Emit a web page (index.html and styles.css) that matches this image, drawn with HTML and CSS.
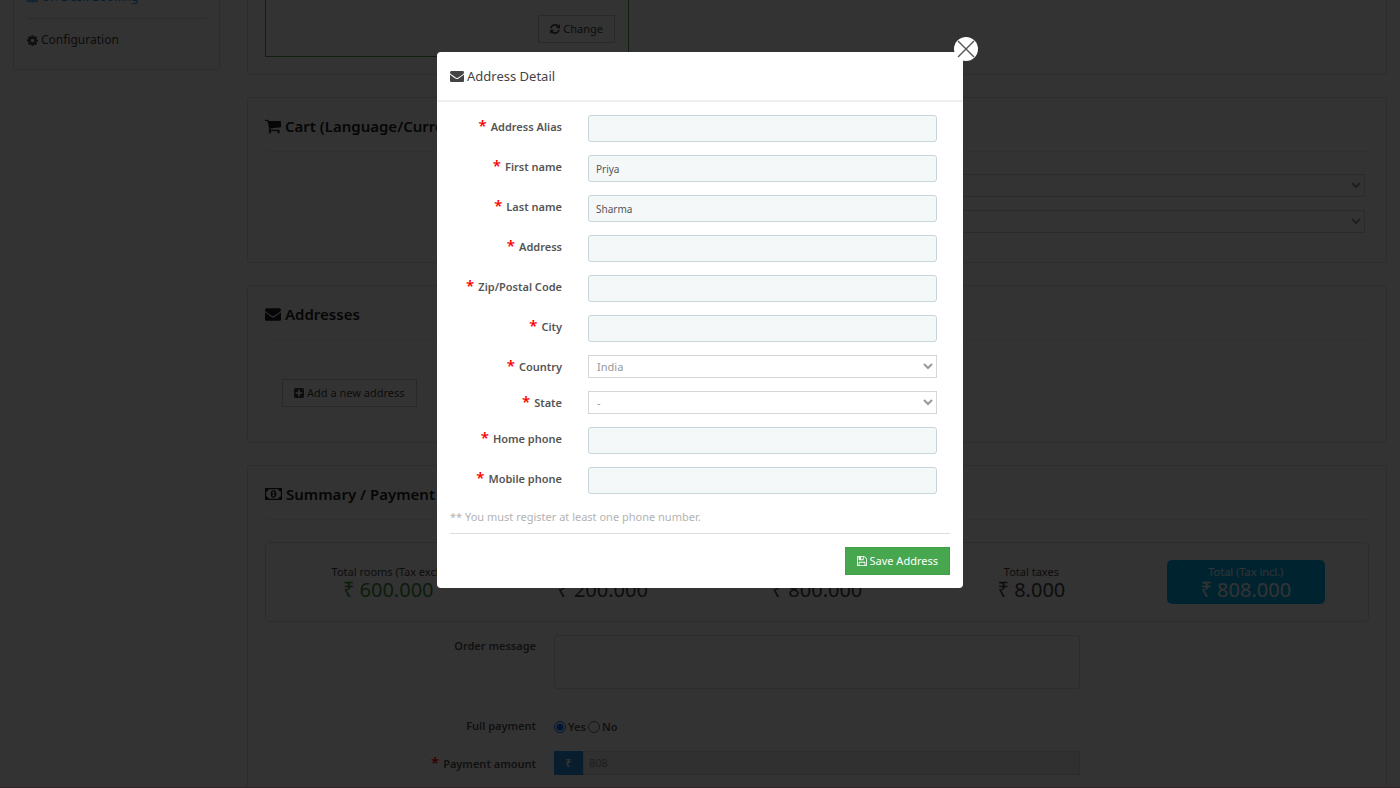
FILE: index.html
```
<!DOCTYPE html>
<html lang="en">
<head>
    <meta charset="UTF-8">
    <meta name="viewport" content="width=device-width, initial-scale=1.0">
    <title>Book Now</title>
    <link rel="stylesheet" href="styles.css">
</head>
<body>
    <!-- Icons used more than once -->
    <svg class="sprite" aria-hidden="true">
        <symbol id="icon-envelope" viewBox="0 0 1792 1792">
            <path d="M1792 710v794q0 66-47 113t-113 47H160q-66 0-113-47T0 1504V710q44 49 101 87 362 246 497 345 57 42 92.500 65.500t94.500 48 110 24.500h2q51 0 110-24.500t94.500-48 92.500-65.500q170-123 498-345 57-39 100-87zm0-294q0 79-49 151t-122 123q-376 261-468 325-10 7-42.500 30.500t-54 38-52 32.500-57.500 27-50 9h-2q-23 0-50-9t-57.500-27-52-32.500-54-38T639 1015q-91-64-262-182.500T172 690q-62-42-117-115.500T0 438q0-78 41.500-130T160 256h1472q65 0 112.500 47t47.500 113z"/>
        </symbol>
    </svg>

    <div class="page">
        <nav class="sidebar">
            <a href="#" class="menu-link active">
                <svg class="icon" viewBox="0 0 16 14"><path d="M1 1h14v12H1zM1 4.500h14M4.500 4v9M8 4v9M11.500 4v9M1 7.500h14M1 10.500h14" fill="none" stroke="currentColor" stroke-width="1.200"/></svg>
                On Desk Booking
            </a>
            <hr>
            <a href="#" class="menu-link">
                <svg class="icon" viewBox="128 128 1536 1536"><path fill="currentColor" d="M1152 896q0-106-75-181t-181-75-181 75-75 181 75 181 181 75 181-75 75-181zm512-109v222q0 12-8 23t-20 13l-185 28q-19 54-39 91 35 50 107 138 10 12 10 25t-9 23q-27 37-99 108t-94 71q-12 0-26-9l-138-108q-44 23-91 38-16 136-29 186-7 28-36 28H785q-14 0-24.500-8.500T749 1640l-28-184q-49-16-90-37l-141 107q-10 9-25 9-14 0-25-11-126-114-165-168-7-10-7-23 0-12 8-23 15-21 51-66.500t54-70.500q-27-50-41-99l-183-27q-13-2-21-12.500t-8-23.500V783q0-12 8-23t19-13l186-28q14-46 39-92-40-57-107-138-10-12-10-24 0-10 9-23 26-36 98.500-107.500T465 286q13 0 26 10l138 107q44-23 91-38 16-136 29-186 7-28 36-28h222q14 0 24.500 8.500T1043 181l28 184q49 16 90 37l142-107q9-9 24-9 13 0 25 10 129 119 165 170 7 8 7 22 0 12-8 23-15 21-51 66.500t-54 70.500q26 50 41 98l183 28q13 2 21 12.500t8 23.500z"/></svg>
                Configuration
            </a>
        </nav>

        <main class="content">
            <section class="card card-booking">
                <div class="selected-box">
                    <button type="button" class="btn">
                        <svg class="icon" viewBox="0 0 1536 1536"><path fill="currentColor" d="M1511 928q0 5-1 7-64 268-268 434.500T764 1536q-146 0-282.500-55T238 1324l-129 129q-19 19-45 19t-45-19-19-45V960q0-26 19-45t45-19h448q26 0 45 19t19 45-19 45l-137 137q71 66 161 102t187 36q134 0 250-65t186-179q11-17 53-117 8-23 30-23h192q13 0 22.500 9.500t9.500 22.500zm25-800v448q0 26-19 45t-45 19h-448q-26 0-45-19t-19-45 19-45l138-138Q969 256 768 256q-134 0-250 65T332 500q-11 17-53 117-8 23-30 23H50q-13 0-22.500-9.500T18 608v-7q65-268 270-434.500T768 0q146 0 284 55.500T1297 212l130-129q19-19 45-19t45 19 19 45z"/></svg>
                        Change
                    </button>
                </div>
            </section>

            <section class="card card-cart">
                <h2>
                    <svg class="icon" viewBox="0 0 1664 1536"><path fill="currentColor" d="M640 1408q0 52-38 90t-90 38-90-38-38-90 38-90 90-38 90 38 38 90zm896 0q0 52-38 90t-90 38-90-38-38-90 38-90 90-38 90 38 38 90zm128-1088v512q0 24-16.500 42.500T1607 896L563 1018q13 60 13 70 0 16-24 64h920q26 0 45 19t19 45-19 45-45 19H448q-26 0-45-19t-19-45q0-11 8-31.500t16-36 21.500-40T445 1079L268 256H64q-26 0-45-19T0 192t19-45 45-19h256q16 0 28.500 6.500T368 150t13 24.500 8 26 5.500 29.500 4.500 26h1201q26 0 45 19t19 45z"/></svg>
                    Cart (Language/Currency)
                </h2>
                <hr>
                <div class="cart-selects">
                    <select class="select" aria-label="Language"><option></option></select>
                    <select class="select" aria-label="Currency"><option></option></select>
                </div>
            </section>

            <section class="card card-addresses">
                <h2>
                    <svg class="icon" fill="currentColor"><use href="#icon-envelope"/></svg>
                    Addresses
                </h2>
                <hr>
                <button type="button" class="btn btn-add">
                    <svg class="icon" viewBox="0 0 1536 1536"><path fill="currentColor" d="M1280 832V704q0-26-19-45t-45-19H896V320q0-26-19-45t-45-19H704q-26 0-45 19t-19 45v320H320q-26 0-45 19t-19 45v128q0 26 19 45t45 19h320v320q0 26 19 45t45 19h128q26 0 45-19t19-45V896h320q26 0 45-19t19-45zm256-544v960q0 119-84.500 203.500T1248 1536H288q-119 0-203.500-84.500T0 1248V288Q0 169 84.500 84.500T288 0h960q119 0 203.500 84.500T1536 288z"/></svg>
                    Add a new address
                </button>
            </section>

            <section class="card card-summary">
                <h2>
                    <svg class="icon icon-wide" viewBox="0 0 17 12"><path fill="currentColor" fill-rule="evenodd" d="M0 0h17v12H0zM3.500 1.200A2.300 2.300 0 0 1 1.200 3.500v5a2.300 2.300 0 0 1 2.300 2.300h10a2.300 2.300 0 0 1 2.300-2.300v-5a2.300 2.300 0 0 1-2.300-2.300zM8.500 2.200a2.800 3.800 0 1 1 0 7.600 2.800 3.800 0 0 1 0-7.600zM8 3.400L6.900 4.400l.5.600.5-.3v2.700H7v.9h3v-.9h-.9v-4z"/></svg>
                    Summary / Payment
                </h2>
                <hr>
                <div class="totals">
                    <div class="total total-rooms">Total rooms (Tax excl.)<strong>₹ 600.000</strong></div>
                    <div class="total">Extra services<strong>₹ 200.000</strong></div>
                    <div class="total">Total (Tax excl.)<strong>₹ 800.000</strong></div>
                    <div class="total">Total taxes<strong>₹ 8.000</strong></div>
                    <div class="total total-final">Total (Tax incl.)<strong>₹ 808.000</strong></div>
                </div>
                <form class="payment-form">
                    <label class="label" for="order_message">Order message</label>
                    <div class="field"><textarea id="order_message"></textarea></div>
                    <span class="label">Full payment</span>
                    <div class="field radios">
                        <input type="radio" name="full_payment" id="full_yes" checked><label for="full_yes">Yes</label>
                        <input type="radio" name="full_payment" id="full_no"><label for="full_no">No</label>
                    </div>
                    <label class="label required" for="payment_amount">Payment amount</label>
                    <div class="field amount">
                        <span class="addon">₹</span>
                        <input type="text" id="payment_amount" value="808" disabled>
                    </div>
                </form>
            </section>
        </main>
    </div>

    <div class="overlay">
        <div class="modal" role="dialog" aria-labelledby="modal_title">
            <button type="button" class="close" aria-label="Close">
                <svg viewBox="0 0 24 24"><path d="M4 4l16 16M20 4L4 20" fill="none" stroke="#555" stroke-width="1.400"/></svg>
            </button>
            <h3 class="modal-title" id="modal_title">
                <svg class="icon" fill="currentColor"><use href="#icon-envelope"/></svg>
                Address Detail
            </h3>
            <form class="modal-body">
                <div class="address-form">
                    <label class="label required" for="alias">Address Alias</label>
                    <input type="text" class="input" id="alias">
                    <label class="label required" for="firstname">First name</label>
                    <input type="text" class="input" id="firstname" value="Priya">
                    <label class="label required" for="lastname">Last name</label>
                    <input type="text" class="input" id="lastname" value="Sharma">
                    <label class="label required" for="address1">Address</label>
                    <input type="text" class="input" id="address1">
                    <label class="label required" for="postcode">Zip/Postal Code</label>
                    <input type="text" class="input" id="postcode">
                    <label class="label required" for="city">City</label>
                    <input type="text" class="input" id="city">
                    <label class="label required" for="country">Country</label>
                    <select class="select" id="country"><option>India</option></select>
                    <label class="label required" for="state">State</label>
                    <select class="select" id="state"><option>-</option></select>
                    <label class="label required" for="phone">Home phone</label>
                    <input type="text" class="input" id="phone">
                    <label class="label required" for="phone_mobile">Mobile phone</label>
                    <input type="text" class="input" id="phone_mobile">
                </div>
                <p class="note">** You must register at least one phone number.</p>
                <div class="modal-footer">
                    <button type="button" class="btn btn-success">
                        <svg class="icon" viewBox="0 0 1536 1536"><path fill="currentColor" d="M384 1408h768v-384H384v384zm896 0h128V512q0-14-10-38.500t-20-34.500l-281-281q-10-10-34-20t-39-10v416q0 40-28 68t-68 28H352q-40 0-68-28t-28-68V128H128v1280h128V992q0-40 28-68t68-28h832q40 0 68 28t28 68v416zM896 480V160q0-13-9.500-22.500T864 128H672q-13 0-22.500 9.500T640 160v320q0 13 9.500 22.500T672 512h192q13 0 22.500-9.500T896 480zm640 32v928q0 40-28 68t-68 28H96q-40 0-68-28t-28-68V96q0-40 28-68T96 0h928q40 0 88 20t76 48l280 280q28 28 48 76t20 88z"/></svg>
                        Save Address
                    </button>
                </div>
            </form>
        </div>
    </div>
</body>
</html>
```
FILE: styles.css
```
* {
    box-sizing: border-box;
}
body {
    margin: 0;
    background-color: #fff;
    color: #444;
    font-family: "Noto Sans", sans-serif;
    font-size: 11px;
    line-height: 16px;
}
input, select, textarea, button {
    font-family: inherit;
    font-size: inherit;
    line-height: inherit;
}
hr {
    border: 0;
    border-top: 1px solid #eee;
    margin: 0;
}
.sprite {
    display: none;
}
.icon {
    width: 10px;
    height: 10px;
    flex: none;
}
.page {
    display: flex;
    align-items: flex-start;
    gap: 27px;
    height: 100vh;
    overflow: hidden;
    padding: 0 13px;
    border-bottom: 1px solid #d9b3bd;
}

/* Sidebar */
.sidebar {
    flex: 0 0 207px;
    height: 70px;
    padding: 0 13px;
    border: 1px solid #ddd;
    border-top: 0;
    border-radius: 0 0 4px 4px;
    font-size: 12px;
}
.sidebar hr {
    margin: 12px 0;
    border-color: #ddd;
}
.sidebar .icon {
    width: 11px;
    height: 11px;
}
.menu-link {
    display: flex;
    align-items: center;
    gap: 3px;
    height: 18px;
    color: #444;
    text-decoration: none;
}
.menu-link.active {
    color: #2a8fe0;
    margin-top: -12px;
}

/* Cards */
.content {
    flex: 1;
    display: flex;
    flex-direction: column;
    gap: 22px;
}
.card {
    padding: 16px 17px;
    border: 1px solid #e0e0e0;
    border-radius: 4px;
}
.card h2 {
    display: flex;
    align-items: center;
    gap: 4px;
    height: 24px;
    margin: 0 0 13px;
    color: #222;
    font-size: 15px;
    font-weight: 600;
}
.card h2 .icon {
    width: 16px;
    height: 16px;
}
.card h2 .icon-wide {
    width: 17px;
    height: 12px;
}
.card-booking {
    padding-top: 0;
    padding-bottom: 17px;
    border-top: 0;
    border-radius: 0 0 4px 4px;
}
.selected-box {
    display: flex;
    align-items: flex-end;
    justify-content: flex-end;
    width: 364px;
    height: 57px;
    padding: 13px;
    border: 1px solid #46a74e;
    border-top: 0;
}
.btn {
    display: inline-flex;
    align-items: center;
    gap: 3px;
    height: 28px;
    padding: 0 11px;
    border: 1px solid #ccc;
    background-color: #fff;
    color: #444;
}
.select {
    height: 23px;
    padding: 0 4px;
    border: 1px solid #d6d6d6;
    border-radius: 0;
    background-color: #fff;
    color: #999;
}
.card-cart {
    min-height: 166px;
}
.cart-selects {
    display: grid;
    gap: 13px;
    width: 50%;
    margin: 22px 4px 0 auto;
}
.card-addresses {
    min-height: 158px;
}
.btn-add {
    margin: 39px 17px 0;
}

/* Summary */
.totals {
    display: grid;
    grid-template-columns: repeat(5, 1fr);
    margin: 22px 0 13px;
    padding: 17px 15px;
    border: 1px solid #ddd;
    border-radius: 5px;
}
.total {
    margin: 0 28px;
    padding: 4px 0;
    border-radius: 5px;
    text-align: center;
    white-space: nowrap;
}
.total strong {
    display: block;
    font-size: 20px;
    font-weight: 400;
    line-height: 20px;
}
.total-rooms strong {
    color: #3c903f;
}
.total-final {
    background-color: #00aff0;
    color: #fff;
}
.label {
    color: #555;
    font-weight: 600;
    text-align: right;
}
.required::before {
    content: "*";
    margin-right: 4px;
    color: red;
    font-size: 15px;
    font-weight: 600;
    line-height: 16px;
}
.payment-form {
    display: grid;
    grid-template-columns: 25% 50%;
    padding: 0 8px;
}
.payment-form .label {
    padding: 3px 9px 0 0;
}
.payment-form .field {
    margin: 0 9px 26px;
}
.payment-form textarea {
    display: block;
    width: 100%;
    height: 54px;
    border: 1px solid #ddd;
    border-radius: 3px;
    resize: none;
}
.payment-form .radios {
    display: flex;
    align-items: center;
    gap: 2px;
    height: 23px;
    margin-bottom: 13px;
    color: #555;
    font-weight: 600;
}
.radios input {
    width: 12px;
    height: 12px;
    margin: 0;
}
.amount {
    display: flex;
    height: 24px;
}
.amount .addon {
    width: 29px;
    background-color: #2a8fe0;
    color: #fff;
    font-weight: 600;
    line-height: 24px;
    text-align: center;
}
.amount input {
    flex: 1;
    padding: 0 5px;
    border: 1px solid #ddd;
    background-color: #eee;
    color: #999;
}

/* Address popup */
.overlay {
    position: fixed;
    inset: 0;
    padding-top: 52px;
    background-color: rgba(0, 0, 0, 0.8);
}
.modal {
    position: relative;
    width: 526px;
    margin: 0 auto;
    border-radius: 4px;
    background-color: #fff;
}
.close {
    position: absolute;
    top: -15px;
    right: -15px;
    width: 24px;
    height: 24px;
    padding: 0;
    border: 0;
    border-radius: 50%;
    background-color: #fff;
}
.close svg {
    display: block;
}
.modal-title {
    display: flex;
    align-items: center;
    gap: 3px;
    height: 50px;
    margin: 0;
    padding: 0 13px;
    border-bottom: 2px solid #eee;
    font-size: 13px;
    font-weight: 400;
}
.modal-title .icon {
    width: 14px;
    height: 14px;
}
.modal-body {
    padding: 13px;
}
.address-form {
    display: grid;
    grid-template-columns: 1fr 3fr;
    row-gap: 13px;
}
.address-form .label {
    padding: 2px 13px 0 0;
}
.address-form .input,
.address-form .select {
    margin: 0 13px;
}
.input {
    height: 27px;
    padding: 0 7px;
    border: 1px solid #c7d6db;
    border-radius: 3px;
    background-color: #f5f8f9;
    color: #555;
    font-size: 10px;
}
.note {
    margin: 15px 0 8px;
    color: #b3b3b3;
}
.modal-footer {
    display: flex;
    justify-content: flex-end;
    padding-top: 13px;
    border-top: 1px solid #ddd;
}
.btn-success {
    border-color: #3fa046;
    background-color: #46a74e;
    color: #fff;
}
```
